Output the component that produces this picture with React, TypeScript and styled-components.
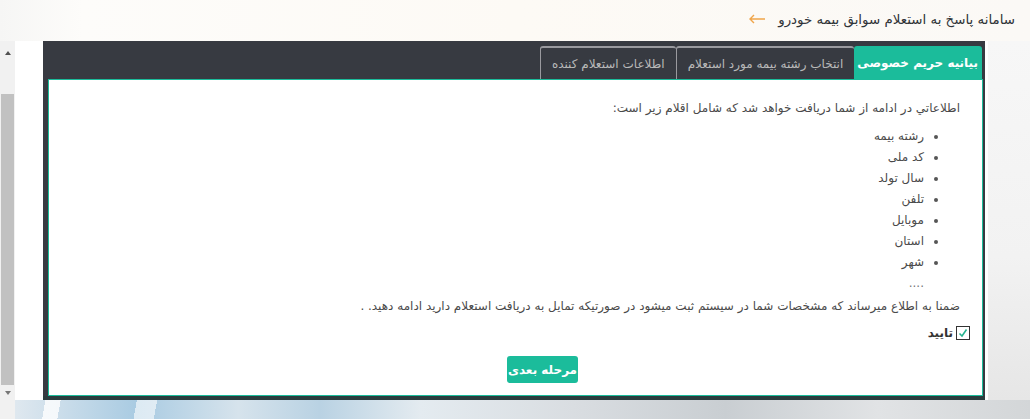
import React from "react";
import styled, { createGlobalStyle } from "styled-components";

const GlobalStyle = createGlobalStyle`
  html, body { margin: 0; padding: 0; }
  body {
    width: 1030px;
    height: 419px;
    overflow: hidden;
    font-family: "DejaVu Sans", "Noto Sans", sans-serif;
  }
`;

const Page = styled.div`
  width: 1030px;
  height: 419px;
  display: flex;
  flex-direction: column;
  background:
    linear-gradient(90deg, #f6f6f5 0%, #fdfcfa 8%, #fdfaf5 50%, #fbf9f6 100%);
  overflow: hidden;
`;

const Header = styled.header`
  height: 41px;
  display: flex;
  align-items: center;
  justify-content: flex-end;
  gap: 12px;
  padding: 0 15px 3px 0;
  box-sizing: border-box;
  direction: ltr;
`;

const Title = styled.h1`
  margin: 0;
  font-size: 13.4px;
  font-weight: normal;
  color: #2f3337;
  direction: rtl;
`;

const Body = styled.div`
  flex: 1;
  display: flex;
  min-height: 0;
`;

const Scrollbar = styled.div`
  width: 15px;
  background: #f1f1f1;
  display: flex;
  flex-direction: column;
  align-items: center;
  padding: 6px 0 20px;
  box-sizing: border-box;
`;

const Arrow = styled.div<{ $down?: boolean }>`
  width: 0;
  height: 0;
  border-left: 3.5px solid transparent;
  border-right: 3.5px solid transparent;
  ${(p) => (p.$down ? "border-top: 4px solid #777;" : "border-bottom: 4px solid #505050;")}
  margin: 4px 0;
`;

const Thumb = styled.div`
  width: 13px;
  margin: 35px 0 2px;
  flex: 1;
  background: #c1c1c1;
`;

const Main = styled.div`
  flex: 1;
  display: flex;
  flex-direction: column;
`;

const Sheet = styled.div`
  height: 359px;
  display: flex;
`;

const WhiteArea = styled.div`
  width: 973px;
  background: #ffffff;
  padding-left: 28px;
  box-sizing: border-box;
  display: flex;
`;

const SideShade = styled.div`
  flex: 1;
  background: linear-gradient(180deg, #f7f7f7 0%, #f2f2f2 60%, #e6e6e6 100%);
`;

const PhotoStrip = styled.div`
  flex: 1;
  background:
    linear-gradient(100deg, transparent 0 30px, rgba(255,255,255,0.8) 30px 45px, transparent 45px 120px, rgba(255,255,255,0.6) 120px 140px, transparent 140px),
    linear-gradient(90deg, #dfe8ef 0%, #a9cbe2 12%, #d6e3ec 22%, #b9d2e3 30%, #e4ebf0 40%, #d9dde1 55%, #c9ced2 70%, #e1e3e5 85%, #d3d6d8 100%);
`;

const Panel = styled.section`
  width: 942px;
  height: 359px;
  background: #373a41;
  border-bottom: 4px solid #2b3c3e;
  box-sizing: border-box;
  padding: 5px 2px 0 5px;
  display: flex;
  flex-direction: column;
  direction: rtl;
`;

const TabBar = styled.nav`
  display: flex;
  height: 33px;
  flex-shrink: 0;
`;

const Tab = styled.div<{ $active?: boolean }>`
  height: 33px;
  box-sizing: border-box;
  display: flex;
  align-items: center;
  font-size: 12px;
  white-space: nowrap;
  border-radius: 3px 3px 0 0;
  ${(p) =>
    p.$active
      ? `background: #1bbc9b; color: #ffffff; font-weight: bold; padding: 0 4px 0 3px; margin-right: 1px;`
      : `background: #373a41; color: #b9b9b9; padding: 0 11px; border: 1px solid #9a9a9f; border-top-width: 2px; border-bottom: none; border-right: none;`}
  &:last-child {
    ${(p) => (p.$active ? "" : "border-left: 1px solid #9a9a9f;")}
  }
`;

const Content = styled.div`
  flex: 1;
  background: #ffffff;
  border: 1.5px solid #1bbc9b;
  padding: 18px 22px 0 22px;
  color: #4a4a4a;
  font-size: 12px;
  line-height: 21px;
  display: flex;
  flex-direction: column;
`;

const Para = styled.p`
  margin: 0;
`;

const List = styled.ul`
  margin: 7px 0 0;
  padding: 0 36px 0 0;
  list-style: disc;
`;

const Item = styled.li`
  line-height: 21px;
  &::marker { color: #555; }
`;

const Dots = styled.div`
  padding-right: 36px;
  color: #777;
`;

const Notice = styled.p`
  margin: 2px 0 0;
`;

const CheckRow = styled.label`
  display: flex;
  align-items: center;
  gap: 3px;
  margin: 8px -10px 0 0;
  font-weight: bold;
  color: #333;
  height: 16px;
`;

const Box = styled.span`
  width: 12px;
  height: 12px;
  border: 1px solid #333;
  background: #fff;
  display: flex;
  align-items: center;
  justify-content: center;
`;

const ButtonRow = styled.div`
  display: flex;
  justify-content: center;
  margin-top: 15px;
  padding-left: 54px;
`;

const NextButton = styled.button`
  width: 71px;
  height: 27px;
  background: #1bbc9b;
  color: #ffffff;
  border: none;
  border-radius: 3px;
  font-family: inherit;
  font-size: 12px;
  font-weight: bold;
  padding: 0;
`;

const items = ["رشته بیمه", "کد ملی", "سال تولد", "تلفن", "موبایل", "استان", "شهر"];

export default function App() {
  return (
    <>
      <GlobalStyle />
      <Page>
        <Header>
          <svg width="18" height="10" viewBox="0 0 18 10">
            <path d="M17 5H2M6 1L2 5l4 4" stroke="#f0a54a" strokeWidth="1.4" fill="none" />
          </svg>
          <Title>سامانه پاسخ به استعلام سوابق بیمه خودرو</Title>
        </Header>
        <Body>
          <Scrollbar>
            <Arrow />
            <Thumb />
            <Arrow $down />
          </Scrollbar>
          <Main>
            <Sheet>
              <WhiteArea>
                <Panel>
                  <TabBar>
                    <Tab $active>بیانیه حریم خصوصی</Tab>
                    <Tab>انتخاب رشته بیمه مورد استعلام</Tab>
                    <Tab>اطلاعات استعلام کننده</Tab>
                  </TabBar>
                  <Content>
                    <Para>اطلاعاتي در ادامه از شما دریافت خواهد شد که شامل اقلام زیر است:</Para>
                    <List>
                      {items.map((t) => (
                        <Item key={t}>{t}</Item>
                      ))}
                    </List>
                    <Dots>....</Dots>
                    <Notice>
                      ضمنا به اطلاع میرساند که مشخصات شما در سیستم ثبت میشود در صورتیکه تمایل به دریافت استعلام دارید ادامه دهید. .
                    </Notice>
                    <CheckRow>
                      <Box>
                        <svg width="10" height="10" viewBox="0 0 10 10">
                          <path d="M1.5 5.5L4 8l4.5-6.5" stroke="#27b38f" strokeWidth="1.6" fill="none" />
                        </svg>
                      </Box>
                      تایید
                    </CheckRow>
                    <ButtonRow>
                      <NextButton>مرحله بعدی</NextButton>
                    </ButtonRow>
                  </Content>
                </Panel>
              </WhiteArea>
              <SideShade />
            </Sheet>
            <PhotoStrip />
          </Main>
        </Body>
      </Page>
    </>
  );
}
